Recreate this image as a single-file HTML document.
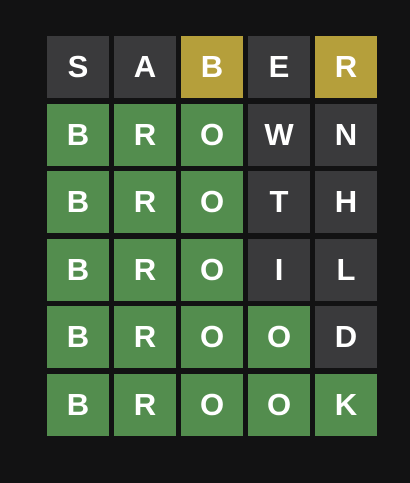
<!DOCTYPE html>
<html><head><style>
html,body{margin:0;padding:0;background:#121213;width:410px;height:483px;overflow:hidden}
.c{position:absolute;width:62px;height:62px;color:#fff;font:bold 31px/62px "Liberation Sans",sans-serif;text-align:center}
.g{background:#3a3a3c}.v{background:#538d4e}.y{background:#b59f3b}
</style></head><body>
<script>
var rows=[["SABER","ggygy"],["BROWN","vvvgg"],["BROTH","vvvgg"],["BROIL","vvvgg"],["BROOD","vvvvg"],["BROOK","vvvvv"]];
var tops=[36,104,171,239,306,374],lefts=[47,114,181,248,315];
var h="";
rows.forEach(function(r,i){for(var j=0;j<5;j++){h+='<div class="c '+r[1][j]+'" style="left:'+lefts[j]+'px;top:'+tops[i]+'px">'+r[0][j]+'</div>';}});
document.write(h);
</script>
</body></html>
